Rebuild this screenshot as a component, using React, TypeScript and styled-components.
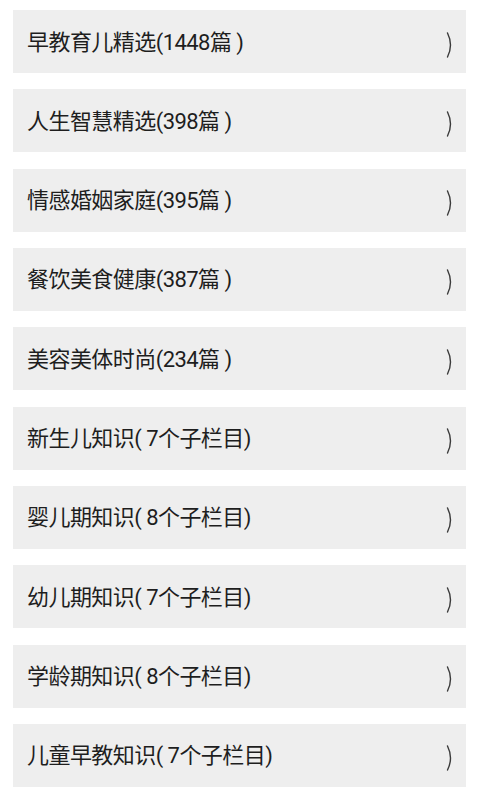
import React from "react";
import styled, { createGlobalStyle } from "styled-components";

const GlobalStyle = createGlobalStyle`
  html, body {
    margin: 0;
    padding: 0;
    background: #ffffff;
  }
  body {
    font-family: Roboto, "Noto Sans CJK SC", sans-serif;
  }
`;

const categories = [
  "早教育儿精选(1448篇 )",
  "人生智慧精选(398篇 )",
  "情感婚姻家庭(395篇 )",
  "餐饮美食健康(387篇 )",
  "美容美体时尚(234篇 )",
  "新生儿知识( 7个子栏目)",
  "婴儿期知识( 8个子栏目)",
  "幼儿期知识( 7个子栏目)",
  "学龄期知识( 8个子栏目)",
  "儿童早教知识( 7个子栏目)",
];

export default function App() {
  return (
    <>
      <GlobalStyle />
      <List>
        {categories.map((title) => (
          <Item key={title}>
            <Title>{title}</Title>
            <Chevron />
          </Item>
        ))}
      </List>
    </>
  );
}

function Chevron() {
  return (
    <Arrow width="8" height="26" viewBox="0 0 8 26">
      <path d="M1.5 1 Q7.5 13 1.5 25" fill="none" stroke="#3a3a3a" strokeWidth="1.4" strokeLinecap="round" />
    </Arrow>
  );
}

const List = styled.div`
  display: flex;
  flex-direction: column;
  gap: 16.33px;
  padding: 10px 14px 0 13px;
`;

const Item = styled.div`
  display: flex;
  align-items: center;
  justify-content: space-between;
  height: 63px;
  padding: 0 12px 0 14px;
  background: #eeeeee;
`;

const Title = styled.span`
  font-size: 22px;
  color: #1e1e1e;
  letter-spacing: -0.55px;
  white-space: nowrap;
  margin-top: -4px;
`;

const Arrow = styled.svg`
  display: block;
  margin-top: 6px;
`;
